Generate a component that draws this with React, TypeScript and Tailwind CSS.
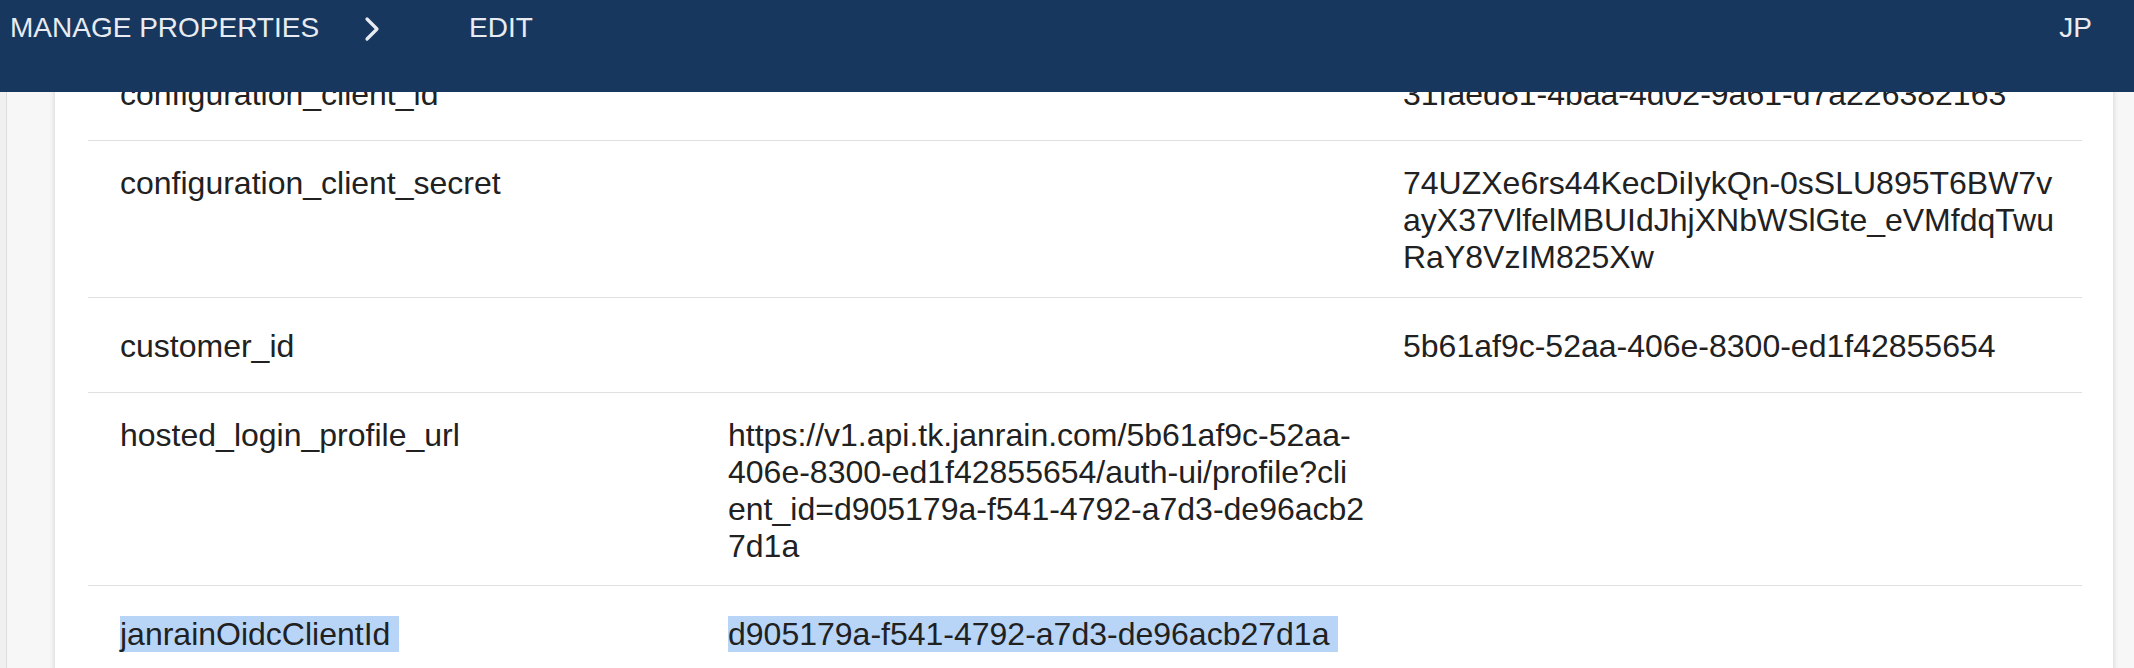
import React from "react";

type Row = {
  keyName: string;
  mid?: string[];
  right?: string[];
  multi: boolean;
  selected?: boolean;
  last?: boolean;
};

const rows: Row[] = [
  { keyName: "configuration_client_id", right: ["31faed81-4baa-4d02-9a61-d7a226382163"], multi: false },
  {
    keyName: "configuration_client_secret",
    right: [
      "74UZXe6rs44KecDiIykQn-0sSLU895T6BW7v",
      "ayX37VlfelMBUIdJhjXNbWSlGte_eVMfdqTwu",
      "RaY8VzIM825Xw",
    ],
    multi: true,
  },
  { keyName: "customer_id", right: ["5b61af9c-52aa-406e-8300-ed1f42855654"], multi: false },
  {
    keyName: "hosted_login_profile_url",
    mid: [
      "https://v1.api.tk.janrain.com/5b61af9c-52aa-",
      "406e-8300-ed1f42855654/auth-ui/profile?cli",
      "ent_id=d905179a-f541-4792-a7d3-de96acb2",
      "7d1a",
    ],
    multi: true,
  },
  {
    keyName: "janrainOidcClientId",
    mid: ["d905179a-f541-4792-a7d3-de96acb27d1a"],
    multi: false,
    selected: true,
    last: true,
  },
];

function Lines({ lines, selected }: { lines?: string[]; selected?: boolean }) {
  if (!lines) return null;
  return (
    <div>
      {lines.map((l, i) => (
        <div key={i} className="whitespace-nowrap">
          {selected ? <span className="bg-[#b8d5f8] pr-[9px]">{l}</span> : l}
        </div>
      ))}
    </div>
  );
}

export default function App() {
  return (
    <div className="h-[668px] w-[2134px] overflow-hidden bg-[#f7f7f7] font-['Liberation_Sans',Arial,sans-serif] flex flex-col">
      <header className="h-[92px] shrink-0 bg-[#18375e] text-[#e8ecf2] text-[28px] leading-[32px] flex items-start pt-[12px] pl-[10px] pr-[42px]">
        <span>MANAGE PROPERTIES</span>
        <svg className="ml-[45px] mt-[4px]" width="16" height="26" viewBox="0 0 16 26" fill="none">
          <polyline
            points="3,3 13,13 3,23"
            stroke="#e8ecf2"
            strokeWidth="3.2"
            strokeLinecap="round"
            strokeLinejoin="round"
          />
        </svg>
        <span className="ml-[89px]">EDIT</span>
        <span className="ml-auto">JP</span>
      </header>
      <div className="flex-1 min-h-0 overflow-hidden flex">
        <div className="w-[7px] shrink-0 bg-[#f0f0f0] border-r border-[#dedede]" />
        <div className="flex-1 pl-[48px] pr-[21px]">
          <div className="-mt-[46px] bg-white shadow-[0_0_6px_rgba(0,0,0,0.16)] pl-[33px] pr-[31px] text-[32px] leading-[37px] text-[#212121]">
            {rows.map((r, i) => (
              <div
                key={i}
                className={
                  "grid grid-cols-[608px_682px_1fr] " +
                  (r.last ? "" : "border-b border-[#e0e0e0] ") +
                  (r.multi ? (i === 3 ? "pt-[24px] pb-[20px]" : "pt-[24px] pb-[21px]") : "pt-[30px] pb-[27px]")
                }
              >
                <div className="pl-[32px]">
                  {r.selected ? (
                    <span className="bg-[#b8d5f8] pr-[9px]">{r.keyName}</span>
                  ) : (
                    r.keyName
                  )}
                </div>
                <div className="pl-[32px]">
                  <Lines lines={r.mid} selected={r.selected} />
                </div>
                <div className="pl-[25px]">
                  <Lines lines={r.right} />
                </div>
              </div>
            ))}
          </div>
        </div>
      </div>
    </div>
  );
}
